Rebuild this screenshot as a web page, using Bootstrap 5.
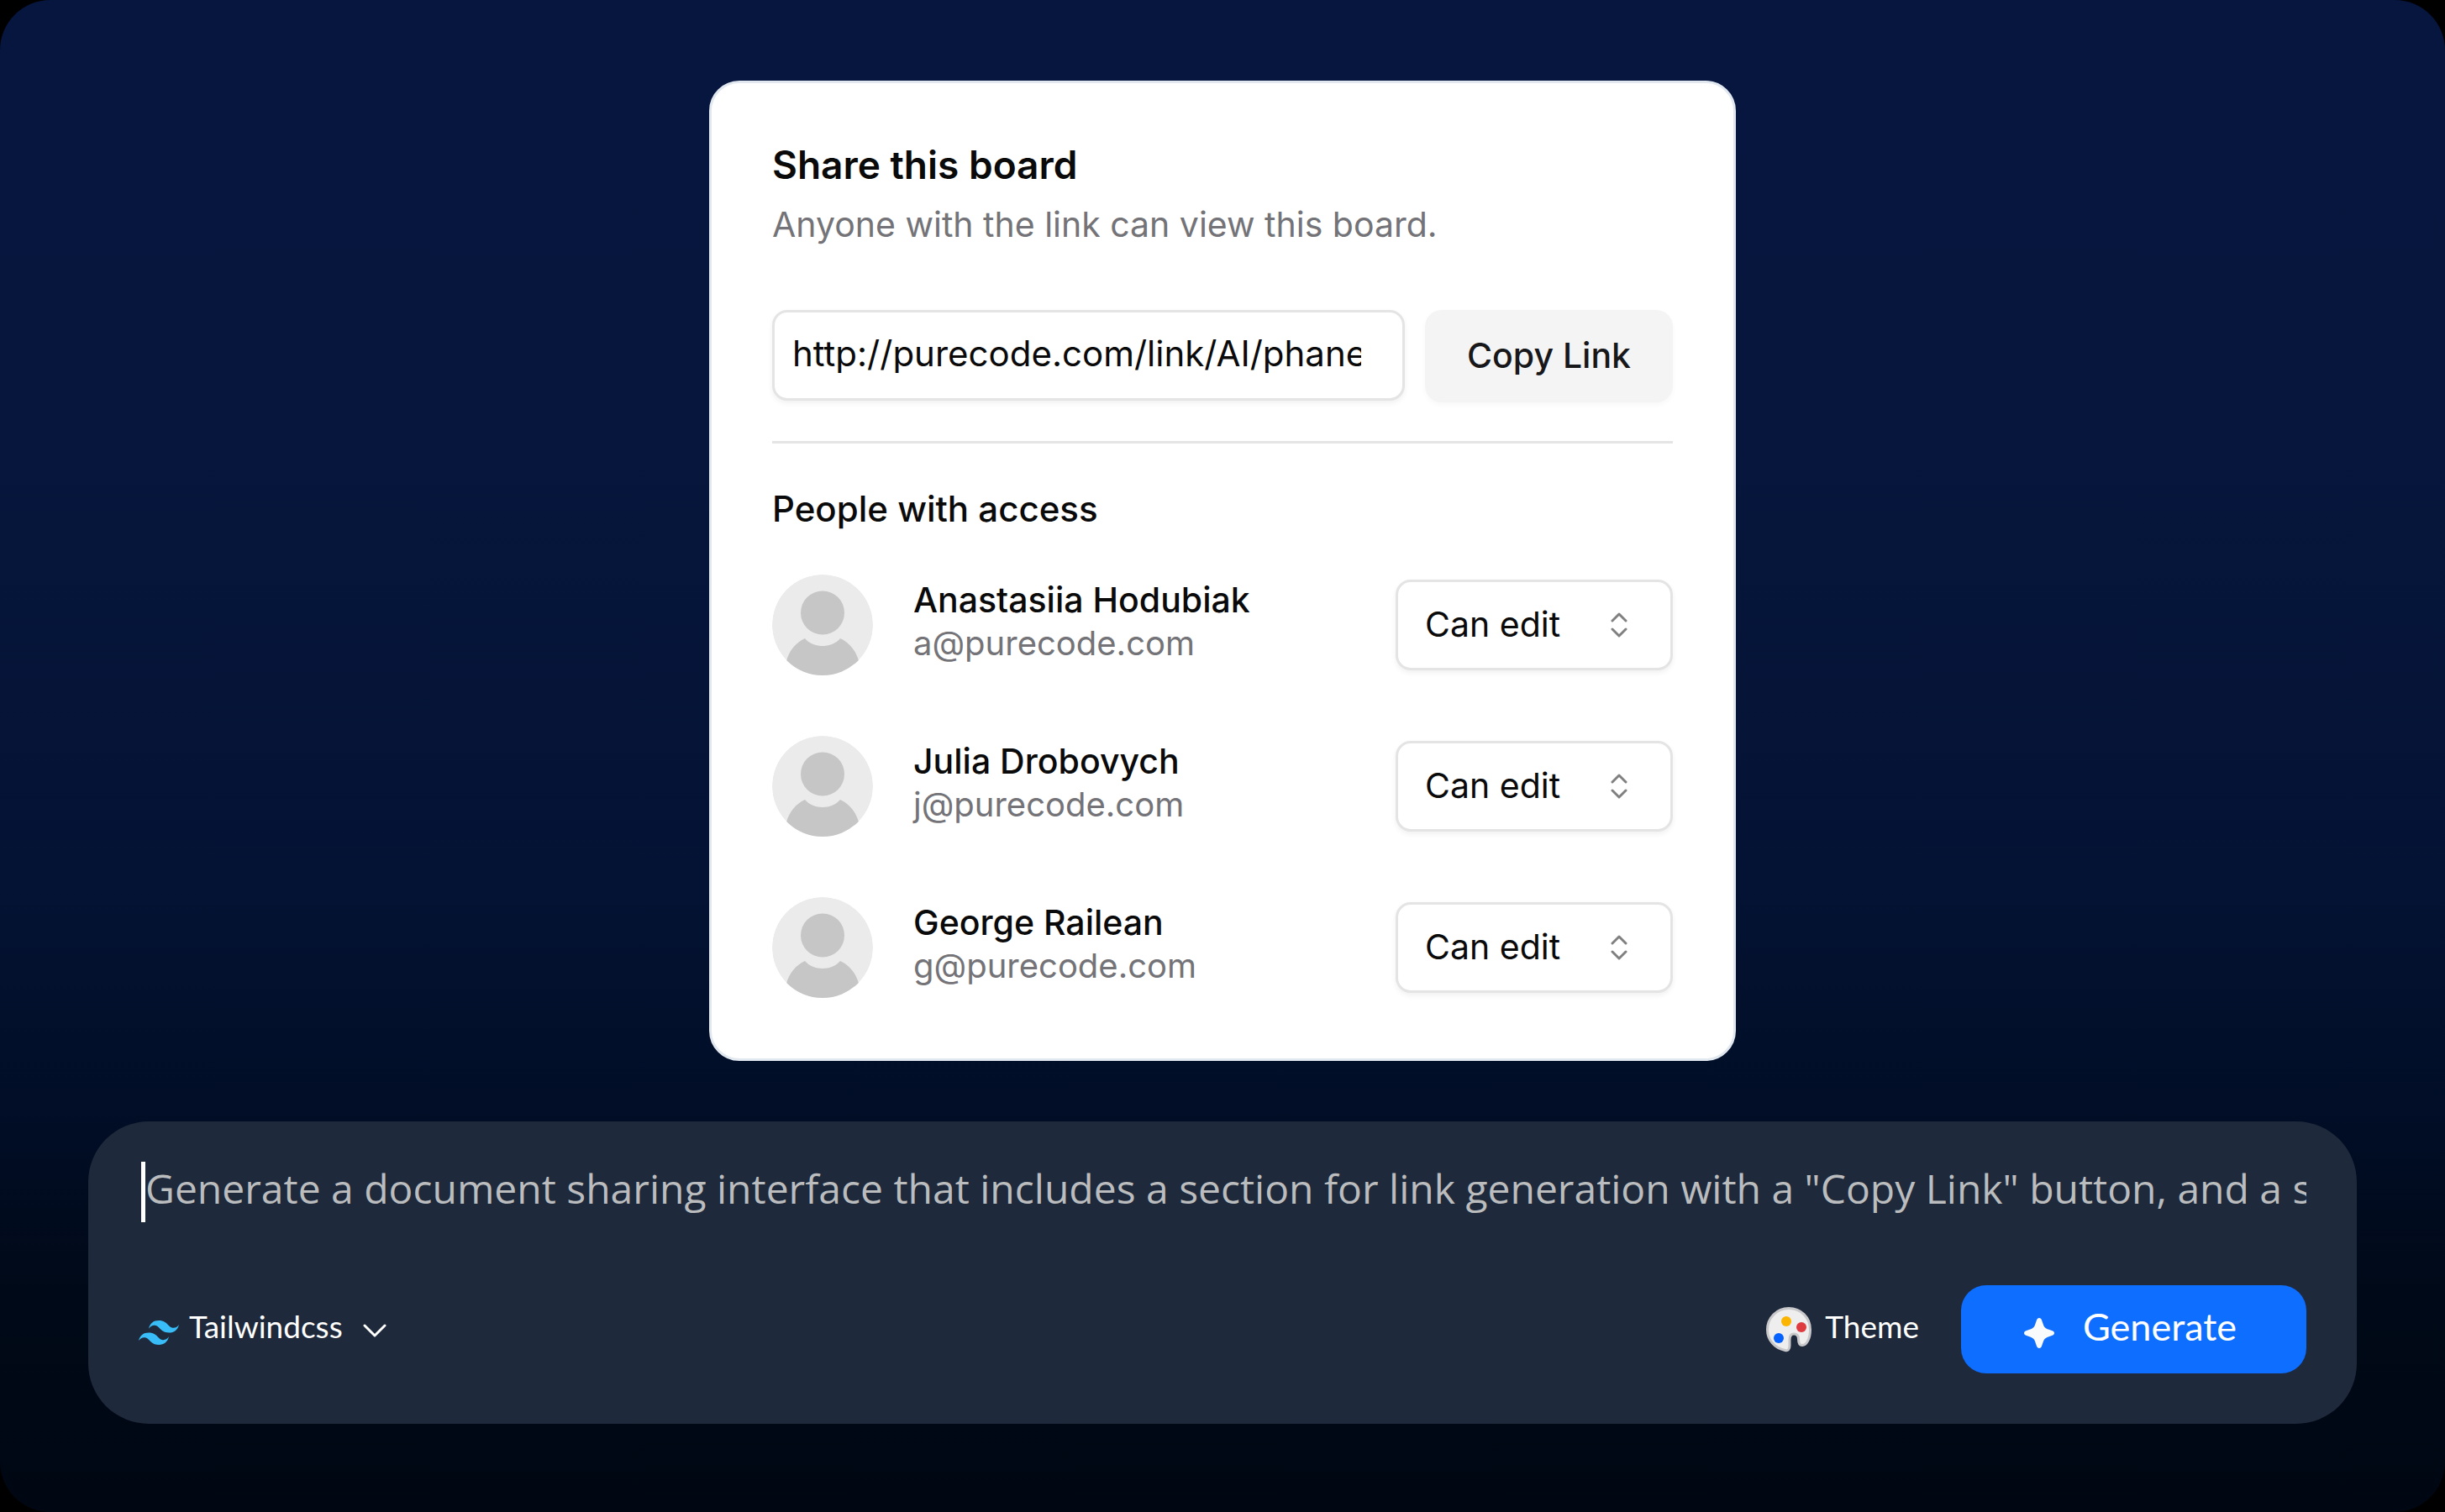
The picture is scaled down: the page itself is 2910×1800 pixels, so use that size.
<!DOCTYPE html>
<html lang="en">
<head>
<meta charset="utf-8">
<meta name="viewport" content="width=device-width, initial-scale=1">
<title>Share this board</title>
<link href="https://cdn.jsdelivr.net/npm/bootstrap@5.3.0/dist/css/bootstrap.min.css" rel="stylesheet">
<style>
  body { background: #000; font-family: Inter, "Liberation Sans", sans-serif; }
  .stage {
    min-height: 100vh;
    padding: 96px 105px 105px;
    gap: 72px;
    border-radius: 60px;
    background: linear-gradient(180deg, #06163f 0%, #06163c 30%, #041334 58%, #010d25 75%, #000917 86%, #000713 100%);
  }
  .share-card {
    max-width: 1222px;
    border: 3px solid #e2e8f0;
    border-radius: 36px;
    padding: 72px;
    color: #0a0a0a;
    font-size: 41px;
    line-height: 60px;
  }
  .share-title { font-size: 46px; line-height: 50px; font-weight: 600; margin-bottom: 16px; }
  .soft { color: #737378; }
  .link-row { margin-top: 72px; gap: 24px; }
  .field {
    height: 108px;
    border: 3px solid #e4e4e4;
    border-radius: 18px;
    font-size: 41px;
    color: #0a0a0a;
    box-shadow: 0 3px 6px rgba(0,0,0,.06);
  }
  .link-field { padding: 0 49px 6px 21px; font-size: 42px; }
  .btn-copy {
    flex: 0 0 295px;
    height: 110px;
    border-radius: 20px;
    background: #f4f4f4;
    color: #18181b;
    font-size: 41px;
    font-weight: 500;
    box-shadow: 0 3px 6px rgba(0,0,0,.03);
  }
  .rule { margin: 46px 0 48px; border-top: 3px solid #e4e4e4; opacity: 1; }
  .people-title { font-size: 42px; line-height: 60px; font-weight: 500; margin-bottom: 48px; }
  .people { gap: 72px; }
  .person { gap: 48px; }
  .avatar { width: 120px; height: 120px; flex: none; }
  .who { line-height: 51px; padding-bottom: 8px; }
  .who .soft { font-size: 40px; }
  .role-pick {
    width: 330px;
    padding: 0 90px 0 32px;
    background-color: #fff;
    background-image: url("data:image/svg+xml,%3Csvg xmlns='http://www.w3.org/2000/svg' viewBox='0 0 20 30' fill='none' stroke='%23808080' stroke-width='3' stroke-linecap='round' stroke-linejoin='round'%3E%3Cpath d='M2 10l8-8 8 8M2 20l8 8 8-8'/%3E%3C/svg%3E");
    background-size: 20px 30px;
    background-position: right 51px center;
  }
  .prompt-panel { background: #1e293b; border-radius: 72px; padding: 48px 60px 60px; }
  .prompt-line { padding-left: 3px; margin-bottom: 75px; }
  .caret-bar { width: 5px; height: 72px; background: #fff; flex: none; }
  .prompt-input {
    height: 72px;
    font-family: "Open Sans", "Noto Sans", sans-serif;
    font-size: 48px;
    color: #babcbe;
  }
  .tool { font-family: Lato, sans-serif; font-size: 37px; line-height: 48px; color: #fff; }
  .tool:hover { color: #fff; }
  .tools-end { gap: 50px; }
  .btn-generate {
    width: 411px;
    height: 105px;
    border-radius: 30px;
    background: #0d6eff;
    gap: 34px;
    font-family: Lato, sans-serif;
    font-size: 45px;
    line-height: 48px;
    color: #fff;
  }
</style>
</head>
<body>
<main class="stage d-flex flex-column justify-content-between">
  <section class="share-card bg-white w-100 mx-auto">
    <h1 class="share-title">Share this board</h1>
    <p class="soft mb-0">Anyone with the link can view this board.</p>
    <div class="link-row d-flex align-items-start">
      <input class="form-control field link-field" type="text" aria-label="Link to the board" value="http://purecode.com/link/AI/phanerozoic" readonly>
      <button class="btn btn-copy border-0 p-0" type="button">Copy Link</button>
    </div>
    <hr class="rule">
    <h2 class="people-title">People with access</h2>
    <ul class="people list-unstyled d-flex flex-column mb-0">
      <li class="person d-flex align-items-center">
        <svg class="avatar" viewBox="0 0 120 120" aria-hidden="true">
          <defs><clipPath id="round"><circle cx="60" cy="60" r="60"/></clipPath></defs>
          <g id="face" clip-path="url(#round)">
            <circle cx="60" cy="60" r="60" fill="#ebebeb"/>
            <circle cx="60" cy="45.500" r="26" fill="#c6c6c6"/>
            <path d="M39 76C28 81 20 91 17 103V120H103V103C100 91 92 81 81 76C76 82 68 85 60 85S44 82 39 76Z" fill="#c6c6c6"/>
          </g>
        </svg>
        <div class="who flex-grow-1">
          <div class="fw-medium" id="p1">Anastasiia Hodubiak</div>
          <div class="soft">a@purecode.com</div>
        </div>
        <select class="form-select field role-pick" aria-labelledby="p1"><option>Can edit</option><option>Can view</option></select>
      </li>
      <li class="person d-flex align-items-center">
        <svg class="avatar" viewBox="0 0 120 120" aria-hidden="true"><use href="#face"/></svg>
        <div class="who flex-grow-1">
          <div class="fw-medium" id="p2">Julia Drobovych</div>
          <div class="soft">j@purecode.com</div>
        </div>
        <select class="form-select field role-pick" aria-labelledby="p2"><option>Can edit</option><option>Can view</option></select>
      </li>
      <li class="person d-flex align-items-center">
        <svg class="avatar" viewBox="0 0 120 120" aria-hidden="true"><use href="#face"/></svg>
        <div class="who flex-grow-1">
          <div class="fw-medium" id="p3">George Railean</div>
          <div class="soft">g@purecode.com</div>
        </div>
        <select class="form-select field role-pick" aria-labelledby="p3"><option>Can edit</option><option>Can view</option></select>
      </li>
    </ul>
  </section>

  <form class="prompt-panel">
    <div class="prompt-line d-flex align-items-center">
      <span class="caret-bar"></span>
      <input class="prompt-input flex-grow-1 bg-transparent border-0 p-0 pb-2" type="text" aria-label="Prompt" value="Generate a document sharing interface that includes a section for link generation with a &quot;Copy Link&quot; button, and a section for people with access">
    </div>
    <div class="d-flex justify-content-between align-items-center">
      <button class="tool btn border-0 p-0 d-flex align-items-center" type="button">
        <svg class="mt-2" width="48" height="29" viewBox="0 4.800 24 14.400" fill="#38bdf8" aria-hidden="true"><path d="M12.001,4.8c-3.2,0-5.2,1.6-6,4.8c1.2-1.6,2.6-2.2,4.2-1.8c0.913,0.228,1.565,0.89,2.288,1.624C13.666,10.618,15.027,12,18.001,12c3.2,0,5.2-1.6,6-4.8c-1.2,1.6-2.6,2.2-4.2,1.8c-0.913-0.228-1.565-0.89-2.288-1.624C16.337,6.182,14.976,4.8,12.001,4.8z M6.001,12c-3.2,0-5.2,1.6-6,4.8c1.2-1.6,2.6-2.2,4.2-1.8c0.913,0.228,1.565,0.89,2.288,1.624c1.177,1.194,2.538,2.576,5.512,2.576c3.2,0,5.2-1.6,6-4.8c-1.2,1.6-2.6,2.2-4.2,1.8c-0.913-0.228-1.565-0.89-2.288-1.624C10.337,13.382,8.976,12,6.001,12z"/></svg>
        <span class="ms-2 ps-1 pb-2">Tailwindcss</span>
        <svg class="ms-4 mt-1" width="28" height="17" viewBox="0 0 28 17" fill="none" stroke="#fff" stroke-width="3" stroke-linecap="round" stroke-linejoin="round" aria-hidden="true"><path d="M2 2l12 12L26 2"/></svg>
      </button>
      <div class="tools-end d-flex align-items-center">
        <button class="tool btn border-0 p-0 d-flex align-items-center gap-3" type="button">
          <svg width="54" height="54" viewBox="0 0 54 54" aria-hidden="true">
            <path d="M27 1.500C41 1.500 52.500 12 52.500 27C52.500 38 48 45.500 43 45.500C39.500 45.500 38.500 42 38.500 38C38.500 34 36.500 32 33 32C29 32 28 35 28 39V46C28 50.500 26 52.500 22.500 51.500C10 49 1.500 39 1.500 27C1.500 13 12.500 1.500 27 1.500Z" fill="#eee" stroke="#c8c8cb" stroke-width="3"/>
            <circle cx="24" cy="17" r="6" fill="#fbb500"/><circle cx="42" cy="24" r="6" fill="#de3b40"/><circle cx="15" cy="37" r="6" fill="#0562ff"/>
          </svg>
          <span class="pb-2">Theme</span>
        </button>
        <button class="btn btn-generate border-0 p-0 pe-2 d-flex align-items-center justify-content-center" type="button">
          <svg class="mt-2" width="36" height="36" viewBox="0 0 36 36" fill="#f9fafb" aria-hidden="true"><path d="M18 0C19.500 0 20.500 1 21 2.500C22.500 6.500 23 9 24.500 11S29 13.500 33 15C35 15.800 36 16.500 36 18S35 20.200 33 21C29 22.500 26.500 23 24.800 24.800S22.500 29.500 21 33.500C20.500 35 19.500 36 18 36S15.500 35 15 33.500C13.500 29.500 13 26.500 11.200 24.800S7 22.500 3 21C1 20.200 0 19.500 0 18S1 15.800 3 15C7 13.500 9.800 13 11.500 11S13.500 6.500 15 2.500C15.500 1 16.500 0 18 0Z"/></svg>
          <span class="pb-2">Generate</span>
        </button>
      </div>
    </div>
  </form>
</main>
<script src="https://cdn.jsdelivr.net/npm/bootstrap@5.3.0/dist/js/bootstrap.bundle.min.js"></script>
</body>
</html>
